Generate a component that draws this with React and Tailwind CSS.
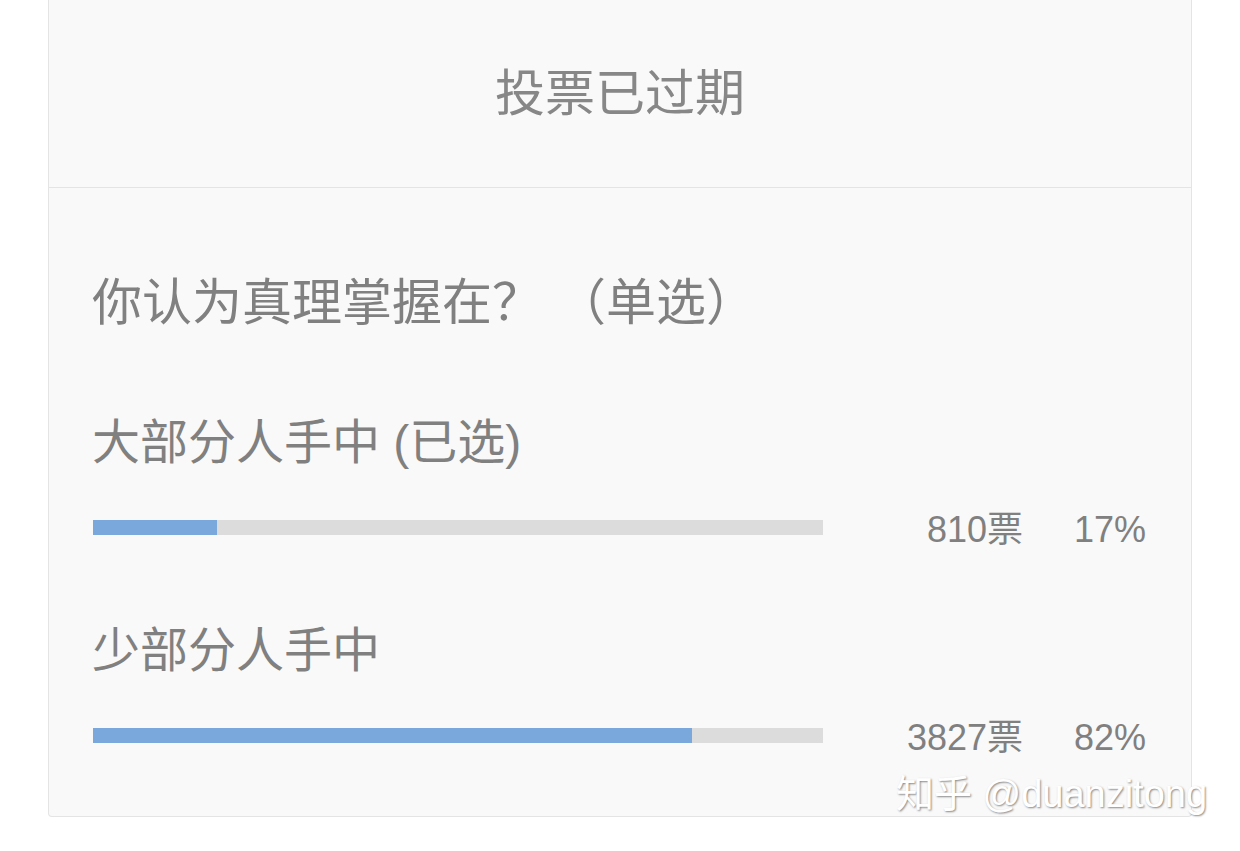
import React from "react";

const options = [
  { label: "大部分人手中 (已选)", votes: 810, percent: 17 },
  { label: "少部分人手中", votes: 3827, percent: 82 },
];

function OptionRow({ option, first }) {
  return (
    <div className={first ? "mt-[92px]" : "mt-[76px]"}>
      <div className="h-[48px] text-[48px] leading-[48px] text-[#808080] whitespace-nowrap">
        {option.label}
      </div>
      <div className="mt-[36px] h-[48px] flex items-center">
        <div className="ml-px w-[730px] h-[15px] bg-[#dcdcdc]">
          <div
            className="h-full bg-[#7aa8dc]"
            style={{ width: `${option.percent}%` }}
          />
        </div>
        <div className="mt-[6px] w-[200px] text-right text-[36px] leading-[48px] text-[#808080]">
          {option.votes}票
        </div>
        <div className="mt-[6px] ml-[51px] text-[36px] leading-[48px] text-[#808080]">
          {option.percent}%
        </div>
      </div>
    </div>
  );
}

export default function App() {
  return (
    <div
      className="relative w-[1240px] h-[851px] bg-white overflow-hidden"
      style={{ fontFamily: '"Liberation Sans", "Noto Sans CJK SC", sans-serif' }}
    >
      <div className="ml-[48px] w-[1144px] bg-[#f9f9f9] border border-t-0 border-[#e4e4e4] rounded-b-[4px]">
        <div className="h-[188px] flex items-center justify-center border-b border-[#e4e4e4]">
          <span className="text-[50px] leading-[50px] text-[#878787]">投票已过期</span>
        </div>

        <div className="pl-[43px] pt-[91px] pb-[57px]">
          <div className="h-[48px] text-[50px] leading-[48px] text-[#808080] whitespace-nowrap">
            你认为真理掌握在？ （单选）
          </div>
          {options.map((opt, i) => (
            <OptionRow key={opt.label} option={opt} first={i === 0} />
          ))}
        </div>
      </div>

      {/* watermark */}
      <div
        className="absolute left-[896px] top-[770px] text-[38px] leading-[48px] text-white whitespace-nowrap"
        style={{ textShadow: "1px 1px 2px rgba(0,0,0,0.45)" }}
      >
        知乎 @duanzitong
      </div>
    </div>
  );
}
